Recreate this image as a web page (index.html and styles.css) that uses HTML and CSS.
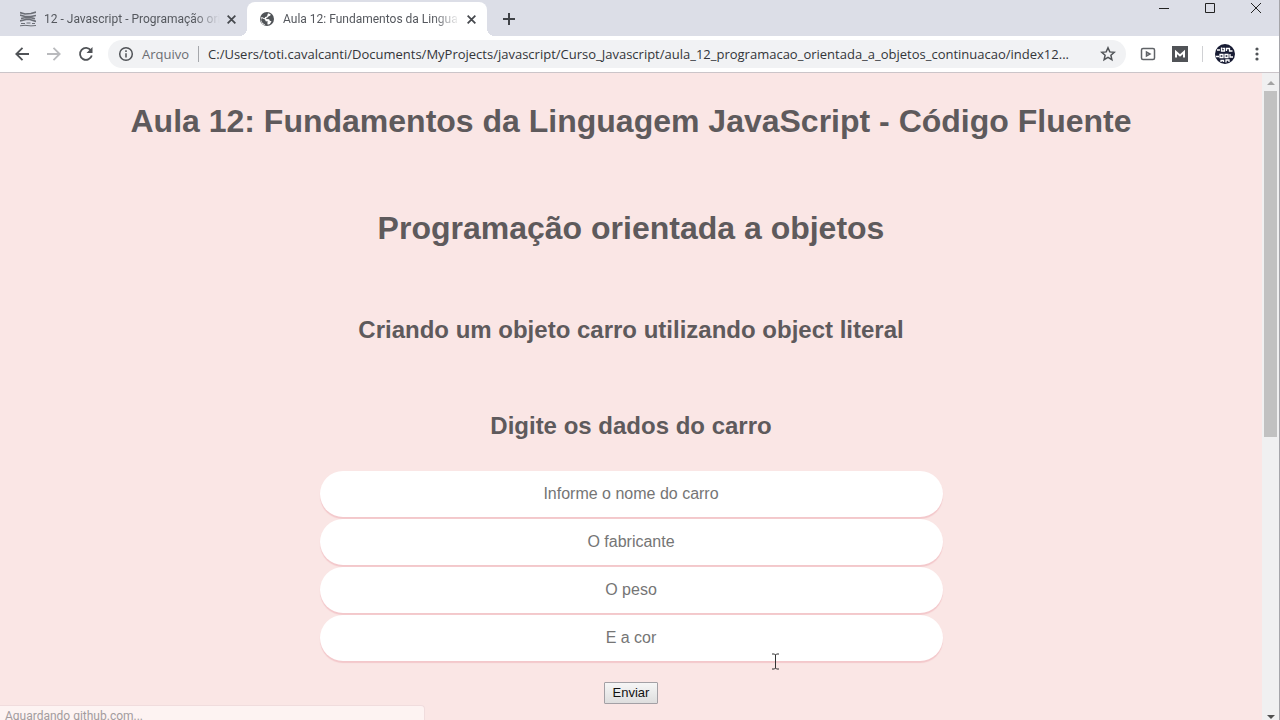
FILE: index.html
```html
<!DOCTYPE html>
<html lang="pt-br">
<head>
  <meta charset="UTF-8">
  <meta name="viewport" content="width=device-width, initial-scale=1.0">
  <title>Aula 12: Fundamentos da Linguagem JavaScript</title>
  <link rel="stylesheet" href="styles.css">
</head>
<body>
  <div class="browser">
    <header class="tab-bar">
      <div class="tab">
        <svg class="favicon" viewBox="0 0 16 16" fill="none" stroke="#6b6e76">
          <path d="M0 1.500l5 1.500 6-.5 5-1.500M0 4l5 1.500h6l5-1M1 7.500l5-1 5 .2 4 1M0 10l6-1.500h4l6 2" stroke-width="1.700"/>
          <path d="M1 12.500h4M6.500 12h4M12 12.500h3M0 14.800l5-.5 6 .6 5-.4" stroke-width="1"/>
        </svg>
        <span class="tab-title">12 - Javascript - Programação ori</span>
        <button class="tab-close" aria-label="Fechar guia"><svg viewBox="0 0 10 10"><path d="M1.500 1.500l7 7M8.500 1.500l-7 7"/></svg></button>
      </div>
      <div class="tab active">
        <svg class="favicon" viewBox="0 0 16 16">
          <circle cx="8" cy="8" r="7" fill="#505357"/>
          <path d="M9 2.300l2.600.9-.2 1.300-2 .9-.8 1.200-1.500.5.300 1 2.800.2.600 1.500 1.700.5-1.600 2.700-2.200.7-.4-2 .7-1.100-2.300-.4-.7-1.600-2.700-1.400-1 .3-.1 2.200 1.400 2.400 2.500 1.700-.3.400-2.600-1.500L2 10.400 1.900 6.500l1.300-.2 2.400 1 .6-1.300 1.800-.6.500-1.700z" fill="#fff"/>
        </svg>
        <span class="tab-title">Aula 12: Fundamentos da Lingua</span>
        <button class="tab-close" aria-label="Fechar guia"><svg viewBox="0 0 10 10"><path d="M1.500 1.500l7 7M8.500 1.500l-7 7"/></svg></button>
      </div>
      <button class="new-tab" aria-label="Nova guia"><svg viewBox="0 0 12 12"><path d="M6 0v12M0 6h12"/></svg></button>
      <div class="window-controls">
        <button aria-label="Minimizar"><svg viewBox="0 0 12 12"><path d="M1 6.500h10"/></svg></button>
        <button aria-label="Maximizar"><svg viewBox="0 0 12 12"><path d="M1.500 1.500h9v9h-9z"/></svg></button>
        <button aria-label="Fechar"><svg viewBox="0 0 12 12"><path d="M1 1l10 10M11 1L1 11"/></svg></button>
      </div>
    </header>

    <nav class="toolbar">
      <button class="nav-button" aria-label="Voltar"><svg viewBox="0 0 16 16"><path d="M15 8H2.500M8.500 1.800L2.300 8l6.200 6.200"/></svg></button>
      <button class="nav-button disabled" aria-label="Avançar"><svg viewBox="0 0 16 16"><path d="M1 8h12.500M7.500 1.800L13.700 8l-6.200 6.200"/></svg></button>
      <button class="nav-button" aria-label="Recarregar"><svg viewBox="0 0 16 16"><path d="M13 4.500A6 6 0 1 0 13.800 9.500"/><path d="M14.500 1v6h-6z" class="solid"/></svg></button>
      <div class="address">
        <svg class="info" viewBox="0 0 16 16"><circle cx="8" cy="8" r="6.300"/><path d="M8 7.200v4.300M8 4.300v1.600"/></svg>
        <span class="scheme">Arquivo</span>
        <span class="divider"></span>
        <span class="url">C:/Users/toti.cavalcanti/Documents/MyProjects/javascript/Curso_Javascript/aula_12_programacao_orientada_a_objetos_continuacao/index12...</span>
        <button class="star" aria-label="Favoritos"><svg viewBox="0 0 16 16"><path d="M8 1.800l1.800 4.100 4.500.4-3.400 3 1 4.400L8 11.400l-3.900 2.300 1-4.400-3.400-3 4.500-.4z"/></svg></button>
      </div>
      <div class="extensions">
        <button aria-label="Reproduzir"><svg viewBox="0 0 16 16"><rect x="1.500" y="2.500" width="13" height="11" rx="1.500"/><path d="M6.500 6v4l3.500-2z"/></svg></button>
        <button aria-label="Extensão M"><svg viewBox="0 0 16 16"><path d="M0 0h16v16H0z" class="solid"/><path d="M4 11.500V6l4 3.500L12 6v5.500" class="mark"/></svg></button>
        <span class="divider"></span>
        <button class="profile" aria-label="Perfil"><svg viewBox="0 0 20 20">
          <circle cx="10" cy="10" r="10" fill="#171b33"/>
          <path d="M2 6h3M6.500 3.500v3.500h3V4.500h-2M11.500 7V4.500h3V7h3M1 12.500h3M5 10.500h3v3H5zM10 10.500h3v3h-3zM15 10v3h3M6 18v-1.500h2.500V18M11 18.500V16h3v2" fill="none" stroke="#fff" stroke-width="1.300"/>
        </svg></button>
        <button class="menu" aria-label="Menu"><svg viewBox="0 0 16 16"><circle cx="8" cy="3" r="1.600"/><circle cx="8" cy="8" r="1.600"/><circle cx="8" cy="13" r="1.600"/></svg></button>
      </div>
    </nav>

    <div class="viewport">
      <main class="page">
        <h1>Aula 12: Fundamentos da Linguagem JavaScript - Código Fluente</h1>
        <h2>Programação orientada a objetos</h2>
        <h3>Criando um objeto carro utilizando object literal</h3>
        <h3>Digite os dados do carro</h3>
        <form class="formulario">
          <input type="text" name="nome" placeholder="Informe o nome do carro" aria-label="Nome do carro">
          <input type="text" name="fabricante" placeholder="O fabricante" aria-label="Fabricante">
          <input type="text" name="peso" placeholder="O peso" aria-label="Peso">
          <input type="text" name="cor" placeholder="E a cor" aria-label="Cor">
          <button type="button" class="enviar">Enviar</button>
        </form>
      </main>
      <div class="scrollbar">
        <svg class="arrow up" viewBox="0 0 8 4"><path d="M0 4l4-4 4 4z"/></svg>
        <div class="track"><div class="thumb"></div></div>
        <svg class="arrow down" viewBox="0 0 8 4"><path d="M0 0l4 4 4-4z"/></svg>
      </div>
      <div class="status">Aguardando github.com...</div>
      <svg class="cursor" viewBox="0 0 9 17"><path d="M1 1h2.500l1 1 1-1H8M4.500 2v13M1 16h2.500l1-1 1 1H8"/></svg>
    </div>
  </div>
</body>
</html>
```
FILE: styles.css
```css
* {
  box-sizing: border-box;
}

body {
  margin: 0;
  font-family: Roboto, "Open Sans", sans-serif;
}

button {
  padding: 0;
  border: none;
  background: none;
}

svg {
  display: block;
}

.browser {
  height: 100vh;
  display: flex;
  flex-direction: column;
  overflow: hidden;
  border-right: 1px solid #a5a5aa;
}

/* tabs */
.tab-bar {
  display: flex;
  align-items: flex-end;
  height: 36px;
  flex-shrink: 0;
  background: #dcdee7;
}

.tab {
  display: flex;
  align-items: center;
  width: 240px;
  height: 34px;
  padding: 0 10px 0 12px;
  color: #55585e;
  font-size: 12px;
}

.tab:first-child {
  width: 247px;
  padding: 0 10px 0 20px;
}

.tab.active {
  position: relative;
  background: #fff;
  border-radius: 8px 8px 0 0;
}

.tab.active::before,
.tab.active::after {
  content: "";
  position: absolute;
  bottom: 0;
  width: 8px;
  height: 8px;
}

.tab.active::before {
  right: 100%;
  background: radial-gradient(circle at 0 0, transparent 8px, #fff 8px);
}

.tab.active::after {
  left: 100%;
  background: radial-gradient(circle at 100% 0, transparent 8px, #fff 8px);
}

.favicon {
  width: 16px;
  height: 16px;
  flex-shrink: 0;
}

.tab-title {
  flex: 1;
  margin: 0 6px 0 8px;
  overflow: hidden;
  white-space: nowrap;
  -webkit-mask-image: linear-gradient(to right, #000 85%, transparent);
  mask-image: linear-gradient(to right, #000 85%, transparent);
}

.tab-close svg {
  width: 11px;
  height: 11px;
  stroke: #46494e;
  stroke-width: 1.6;
}

.new-tab {
  margin: 0 0 11px 16px;
}

.new-tab svg {
  width: 12px;
  height: 12px;
  stroke: #3f4247;
  stroke-width: 2;
}

.window-controls {
  display: flex;
  align-self: flex-start;
  margin-left: auto;
}

.window-controls button {
  display: flex;
  justify-content: center;
  width: 46px;
  padding-top: 2px;
}

.window-controls svg {
  width: 12px;
  height: 12px;
  fill: none;
  stroke: #222;
}

/* toolbar */
.toolbar {
  display: flex;
  align-items: center;
  height: 37px;
  flex-shrink: 0;
  padding: 0 14px;
  background: #fff;
  border-bottom: 1px solid #cbc5c9;
}

.nav-button {
  margin-right: 16px;
}

.nav-button svg {
  width: 16px;
  height: 16px;
  fill: none;
  stroke: #505357;
  stroke-width: 1.8;
}

.nav-button.disabled svg {
  stroke: #b9babd;
}

.toolbar .solid {
  fill: #505357;
  stroke: none;
}

.address {
  display: flex;
  align-items: center;
  flex: 1;
  min-width: 0;
  height: 28px;
  margin-right: 14px;
  margin-left: -2px;
  padding: 0 10px;
  border-radius: 14px;
  background: #f1f2f4;
  font-family: "Open Sans", "Noto Sans", sans-serif;
  font-size: 13px;
}

.info,
.star svg {
  width: 16px;
  height: 16px;
  flex-shrink: 0;
  fill: none;
  stroke: #505357;
  stroke-width: 1.5;
}

.scheme {
  margin-left: 8px;
  color: #6a6d72;
}

.divider {
  width: 1px;
  height: 16px;
  flex-shrink: 0;
  margin: 0 9px;
  background: #a5a7ab;
}

.url {
  flex: 1;
  overflow: hidden;
  white-space: nowrap;
  color: #333539;
}

.extensions {
  display: flex;
  align-items: center;
}

.extensions button {
  margin-right: 16px;
}

.extensions svg {
  width: 16px;
  height: 16px;
  fill: none;
  stroke: #606367;
  stroke-width: 1.5;
}

.extensions .mark {
  stroke: #fff;
  stroke-width: 2;
}

.extensions .divider {
  margin: 0 12px 0 -2px;
  background: #d0d1d4;
}

.extensions .profile {
  margin-right: 14px;
}

.extensions .profile svg {
  width: 20px;
  height: 20px;
  stroke: none;
}

.extensions .menu {
  margin-right: 0;
}

.extensions .menu svg {
  fill: #505357;
  stroke: none;
}

/* page */
.viewport {
  position: relative;
  display: flex;
  flex: 1;
  min-height: 0;
}

.page {
  flex: 1;
  padding: 0 8px;
  overflow: hidden;
  background: #fae6e5;
  color: #5e5a5c;
  font-family: "Liberation Sans", Arial, sans-serif;
  text-align: center;
}

h1,
h2 {
  margin: 28px 0 67px;
  font-size: 32px;
  line-height: 40px;
}

h3 {
  margin: 68px 0;
  font-size: 24px;
  line-height: 28px;
}

.formulario {
  display: flex;
  flex-direction: column;
  align-items: center;
  gap: 2px;
  margin-top: -37px;
}

.formulario input {
  width: 50%;
  height: 46px;
  border: none;
  border-radius: 23px;
  background: #fff;
  box-shadow: 0 2px 1px #f3c8cb;
  font-family: inherit;
  font-size: 16px;
  text-align: center;
}

.formulario input::placeholder {
  color: #757575;
}

.enviar {
  margin-top: 19px;
  padding: 1px 8px;
  border: 1px solid #a3a0a5;
  border-radius: 1px;
  background: linear-gradient(#f6f6f6, #dedede);
  color: #111;
  font-family: inherit;
  font-size: 13px;
  line-height: 18px;
}

/* scrollbar */
.scrollbar {
  display: flex;
  flex-direction: column;
  align-items: center;
  width: 17px;
  background: #f0f0f1;
}

.arrow {
  width: 8px;
  height: 4px;
  flex-shrink: 0;
}

.arrow.up {
  margin: 8px 0 6px;
  fill: #a3a3a3;
}

.arrow.down {
  margin: 6px 0 1px;
  fill: #505050;
}

.track {
  flex: 1;
  width: 13px;
}

.thumb {
  height: 56%;
  background: #c1c1c1;
}

/* over the page */
.status {
  position: absolute;
  bottom: 0;
  left: 0;
  width: 425px;
  height: 15px;
  padding-left: 5px;
  overflow: hidden;
  border: 1px solid #f0dcdd;
  border-width: 1px 1px 0 0;
  border-radius: 0 4px 0 0;
  background: #fdf3f2;
  color: #a39c9e;
  font-size: 12px;
  line-height: 20px;
}

.cursor {
  position: absolute;
  top: 580px;
  left: 771px;
  width: 9px;
  height: 17px;
  fill: none;
  stroke: #333;
}
```
